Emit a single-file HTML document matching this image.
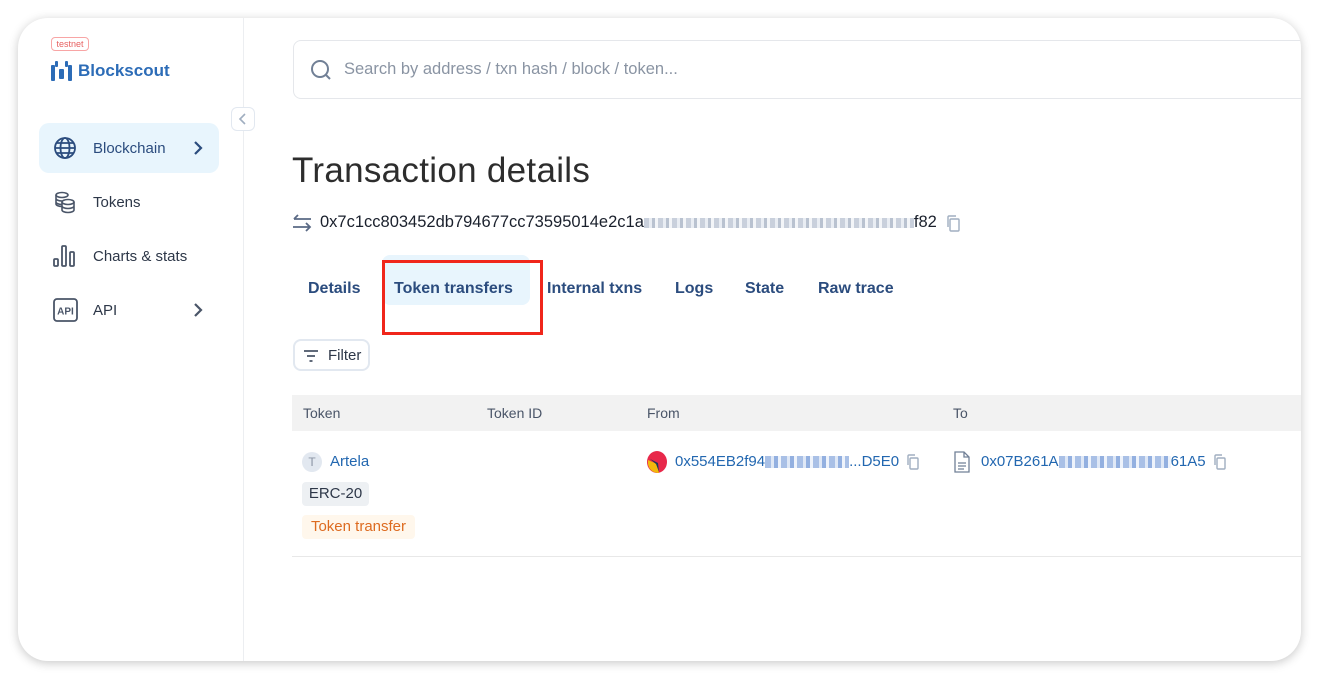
<!DOCTYPE html>
<html><head><meta charset="utf-8"><style>
*{box-sizing:border-box;margin:0;padding:0}
body{width:1319px;height:679px;background:#fff;font-family:"Liberation Sans",sans-serif;position:relative;overflow:hidden}
.card{position:absolute;left:18px;top:18px;width:1283px;height:643px;background:#fff;border-radius:30px;box-shadow:0 2px 10px rgba(0,0,0,.22);overflow:hidden}
.abs{position:absolute}
.side{position:absolute;left:0;top:0;width:226px;height:643px;border-right:1px solid #eceef1}
.nav{position:absolute;left:21px;width:180px;height:50px;border-radius:10px;display:flex;align-items:center;font-size:15px;color:#2d3748}
.nav .ic{position:absolute;left:14px;top:13px}
.nav span{position:absolute;left:54px}
.nav .chev{position:absolute;left:154px;top:17px}
.tab{position:absolute;top:262px;font-size:16px;font-weight:bold;color:#2b4c7e}
.blue{color:#2267b0}
.th{position:absolute;top:405px;font-size:14px;color:#4a5568}
.bl{display:inline-block;height:10px;vertical-align:middle;background:repeating-linear-gradient(90deg,#c9d0dc 0 5px,#e9edf3 5px 8px,#b9c2d0 8px 11px,#f3f5f8 11px 14px)}
.bb{display:inline-block;height:12px;vertical-align:middle;background:repeating-linear-gradient(90deg,#a9c0e6 0 6px,#dfe8f6 6px 9px,#93b0e0 9px 13px,#eef3fb 13px 16px)}
</style></head><body>
<div class="card">
 <div class="side">
  <div class="abs" style="left:33px;top:19px;width:38px;height:14px;border:1px solid #f8a5a5;border-radius:4px;font-size:9px;color:#e76161;text-align:center;line-height:12px">testnet</div>
  <svg class="abs" style="left:33px;top:43px" width="21" height="20" viewBox="0 0 21 20"><g fill="#2c6cb7"><rect x="0" y="4" width="4" height="16" rx="1"/><rect x="4" y="0" width="3" height="6" rx="1"/><rect x="8" y="8" width="5" height="10" rx="1"/><rect x="17" y="4" width="4" height="16" rx="1"/><rect x="14" y="0" width="3" height="6" rx="1"/></g></svg>
  <div class="abs" style="left:60px;top:43px;font-size:17px;font-weight:bold;color:#2c6cb7">Blockscout</div>
  <div class="nav" style="top:105px;background:#e8f5fd;color:#2b4c7e">
   <svg class="ic" width="24" height="24" viewBox="0 0 24 24" fill="none" stroke="#2b4c7e" stroke-width="1.8"><circle cx="12" cy="12" r="10"/><ellipse cx="12" cy="12" rx="4.5" ry="10"/><path d="M2 12h20M3.5 7h17M3.5 17h17"/></svg>
   <span>Blockchain</span>
   <svg class="chev" width="10" height="16" viewBox="0 0 10 16" fill="none" stroke="#2b4c7e" stroke-width="2.2"><path d="M2 2l6 6-6 6"/></svg>
  </div>
  <div class="nav" style="top:159px">
   <svg class="ic" width="24" height="24" viewBox="0 0 24 24" fill="none" stroke="#4a5568" stroke-width="1.6"><ellipse cx="9" cy="5" rx="6" ry="2.5"/><path d="M3 5v9c0 1.4 2.7 2.5 6 2.5M3 8.5c0 1.4 2.7 2.5 6 2.5M3 12c0 1.4 2.7 2.5 6 2.5"/><ellipse cx="15" cy="12" rx="6" ry="2.5"/><path d="M9 12v8c0 1.4 2.7 2.5 6 2.5s6-1.1 6-2.5v-8M9 16c0 1.4 2.7 2.5 6 2.5s6-1.1 6-2.5"/></svg>
   <span>Tokens</span>
  </div>
  <div class="nav" style="top:213px">
   <svg class="ic" width="24" height="24" viewBox="0 0 24 24" fill="none" stroke="#4a5568" stroke-width="1.8"><rect x="1" y="15" width="4" height="7" rx="1"/><rect x="9" y="2" width="4" height="20" rx="1"/><rect x="17" y="8" width="4" height="14" rx="1"/></svg>
   <span>Charts &amp; stats</span>
  </div>
  <div class="nav" style="top:267px">
   <svg class="ic" width="25" height="24" viewBox="0 0 25 24"><rect x="1" y="1" width="23" height="22" rx="3" fill="none" stroke="#4a5568" stroke-width="1.8"/><text x="12.5" y="16.5" text-anchor="middle" font-family="Liberation Sans" font-weight="bold" font-size="10" fill="#4a5568">API</text></svg>
   <span>API</span>
   <svg class="chev" width="10" height="16" viewBox="0 0 10 16" fill="none" stroke="#4a5568" stroke-width="2.2"><path d="M2 2l6 6-6 6"/></svg>
  </div>
 </div>
 <div class="abs" style="left:213px;top:89px;width:24px;height:24px;border:1px solid #e2e8f0;border-radius:6px;background:#fff"><svg width="22" height="22" viewBox="0 0 22 22" fill="none" stroke="#a0aec0" stroke-width="1.6"><path d="M13 6l-5 5 5 5"/></svg></div>

 <div class="abs" style="left:275px;top:22px;width:1050px;height:59px;border:1px solid #e5e7eb;border-radius:8px">
  <svg class="abs" style="left:15px;top:17px" width="24" height="24" viewBox="0 0 24 24" fill="none" stroke="#718096" stroke-width="2"><circle cx="11" cy="11" r="8"/><path d="M17 17l4 4"/></svg>
  <div class="abs" style="left:50px;top:19px;font-size:16.5px;color:#8a94a3">Search by address / txn hash / block / token...</div>
 </div>

 <div class="abs" style="left:274px;top:133px;font-size:35px;color:#2d2d2d;letter-spacing:0.3px">Transaction details</div>
 <svg class="abs" style="left:273px;top:196px" width="22" height="18" viewBox="0 0 22 18" fill="none" stroke="#5a6a85" stroke-width="1.8"><path d="M20 5H3M7 1L3 5M2 13h17M15 9l4 4-4 4"/></svg>
 <div class="abs" style="left:302px;top:195px;font-size:16.5px;color:#1a202c;white-space:nowrap">0x7c1cc803452db794677cc73595014e2c1a<span class="bl" style="width:270px"></span>f82</div>
 <svg class="abs" style="left:929px;top:197px" width="14" height="17" viewBox="0 0 14 17" fill="none" stroke="#a0aec0" stroke-width="1.4"><rect x="3" y="4" width="9" height="12" rx="1"/><path d="M1 12V2a1 1 0 011-1h7"/></svg>

 <div class="abs" style="left:364px;top:237px;width:148px;height:50px;background:#e8f5fd;border-radius:8px"></div>
 <div class="abs" style="left:364px;top:242px;width:161px;height:75px;border:3px solid #f0261b"></div>
 <div class="tab" style="left:290px">Details</div>
 <div class="tab" style="left:376px">Token transfers</div>
 <div class="tab" style="left:529px">Internal txns</div>
 <div class="tab" style="left:657px">Logs</div>
 <div class="tab" style="left:727px">State</div>
 <div class="tab" style="left:800px">Raw trace</div>

 <div class="abs" style="left:275px;top:321px;width:77px;height:32px;border:2px solid #e2e8f0;border-radius:8px">
  <svg class="abs" style="left:8px;top:8px" width="16" height="14" viewBox="0 0 16 14" stroke="#4a5568" stroke-width="1.8"><path d="M1 2h14M4 7h8M6.5 12h3"/></svg>
  <div class="abs" style="left:33px;top:6px;font-size:15px;color:#2d3748">Filter</div>
 </div>

 <div class="abs" style="left:274px;top:377px;width:1020px;height:36px;background:#f2f2f2"></div>
 <div class="th" style="left:285px;top:387px">Token</div>
 <div class="th" style="left:469px;top:387px">Token ID</div>
 <div class="th" style="left:629px;top:387px">From</div>
 <div class="th" style="left:935px;top:387px">To</div>

 <div class="abs" style="left:284px;top:434px;width:20px;height:20px;border-radius:50%;background:#e2e8f0;font-size:12px;color:#8a94a3;text-align:center;line-height:20px">T</div>
 <div class="abs blue" style="left:312px;top:435px;font-size:15px">Artela</div>
 <div class="abs" style="left:284px;top:464px;width:67px;height:24px;background:#edf0f3;border-radius:4px;font-size:15px;color:#2d3748;text-align:center;line-height:24px">ERC-20</div>
 <div class="abs" style="left:284px;top:497px;width:113px;height:24px;background:#fff7ec;border-radius:4px;font-size:15px;color:#dd6b20;text-align:center;line-height:24px">Token transfer</div>

 <svg class="abs" style="left:629px;top:433px" width="20" height="22" viewBox="0 0 20 22"><ellipse cx="10" cy="11" rx="10" ry="11" fill="#e8284a"/><path d="M1 9l9 4 2 9C5 22 0 17 1 9z" fill="#f2b90c"/><path d="M3 8l8 4 1 9-3-8z" fill="#1a3a5a"/></svg>
 <div class="abs blue" style="left:657px;top:435px;font-size:15px;white-space:nowrap">0x554EB2f94<span class="bb" style="width:84px"></span>...D5E0</div>
 <svg class="abs" style="left:889px;top:436px" width="13" height="16" viewBox="0 0 13 16" fill="none" stroke="#a0aec0" stroke-width="1.4"><rect x="3" y="4" width="8" height="11" rx="1"/><path d="M1 11V2a1 1 0 011-1h6"/></svg>
 <svg class="abs" style="left:936px;top:433px" width="16" height="22" viewBox="0 0 16 22" fill="none" stroke="#718096" stroke-width="1.3"><path d="M1 1h9l5 5v15H1z M10 1v5h5 M4 12h8M4 15h8M4 18h6"/></svg>
 <div class="abs blue" style="left:963px;top:435px;font-size:15px;white-space:nowrap">0x07B261A<span class="bb" style="width:112px"></span>61A5</div>
 <svg class="abs" style="left:1196px;top:436px" width="13" height="16" viewBox="0 0 13 16" fill="none" stroke="#a0aec0" stroke-width="1.4"><rect x="3" y="4" width="8" height="11" rx="1"/><path d="M1 11V2a1 1 0 011-1h6"/></svg>
 <div class="abs" style="left:274px;top:538px;width:1020px;height:1px;background:#e8e8e8"></div>
</div>
</body></html>
